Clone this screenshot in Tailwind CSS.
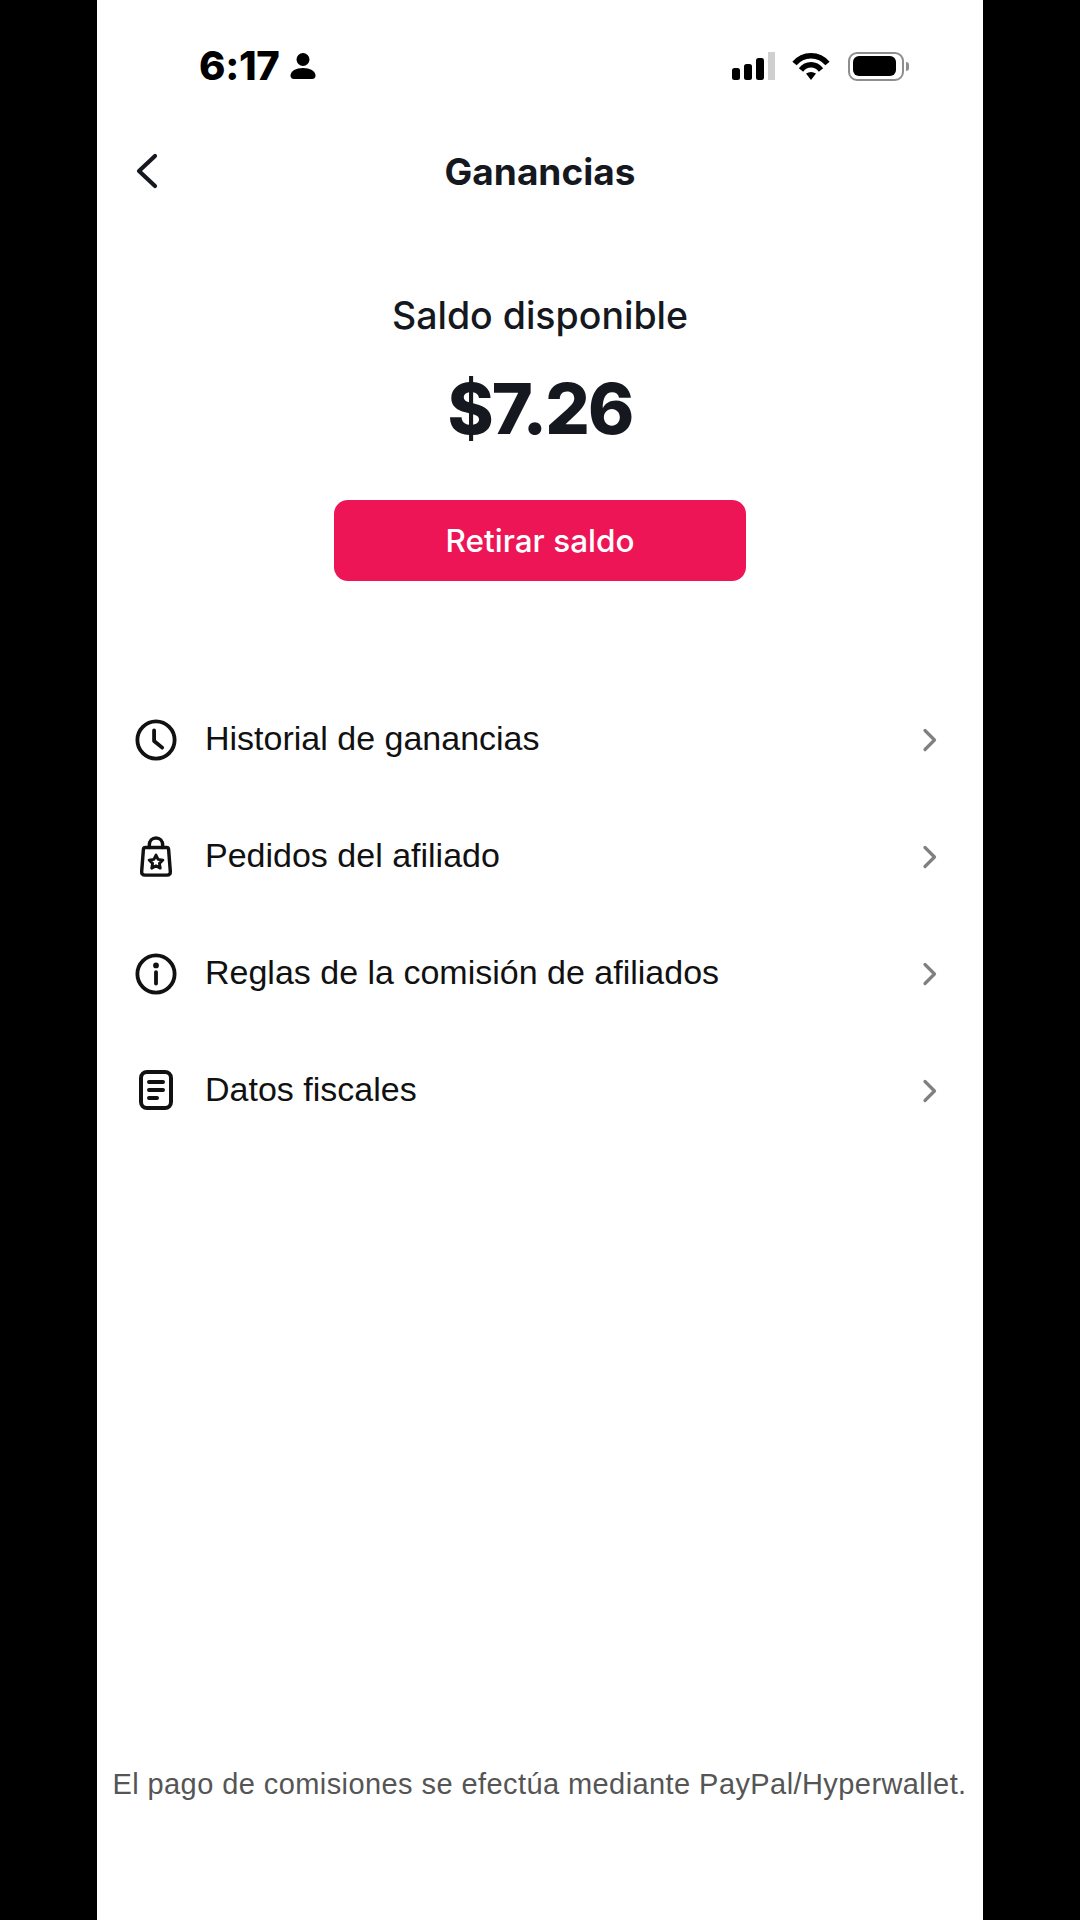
<!DOCTYPE html>
<html lang="es">
<head>
<meta charset="utf-8">
<script src="https://cdn.jsdelivr.net/npm/@tailwindcss/browser@4"></script>
<title>Ganancias</title>
</head>
<body class="bg-black">
<div class="w-[1080px] h-[1920px] bg-black flex justify-center overflow-hidden">
  <main class="w-[886px] h-[1920px] bg-white flex flex-col font-['Inter',sans-serif] text-[#16181f]">
    <!-- status bar -->
    <div class="h-[66px] mt-[33px] relative shrink-0 flex items-center justify-between pl-[102px] pr-[74px]">
      <div class="flex items-center gap-[10px] text-black">
        <span class="text-[40px] font-extrabold leading-none tracking-[-0.3px]">6:17</span>
        <svg width="26" height="28" viewBox="0 0 26 28" fill="currentColor"><circle cx="13" cy="7.500" r="6.500"/><path d="M0.500 23.500c0-4.500 5.500-7.500 12.500-7.500s12.500 3 12.500 7.500c0 2.500-1.500 3.500-3.500 3.500H4c-2 0-3.500-1-3.500-3.500z"/></svg>
      </div>
      <div class="flex items-center">
        <svg class="mr-[16px]" width="44" height="28" viewBox="0 0 44 28"><rect x="0" y="16" width="8" height="12" rx="2.500" fill="#000"/><rect x="12" y="12" width="8" height="16" rx="2.500" fill="#000"/><rect x="24" y="6" width="8" height="22" rx="2.500" fill="#000"/><rect x="36" y="0" width="7" height="28" fill="#cfcfcf"/></svg>
        <svg class="mr-[18px]" width="38" height="28" viewBox="0 0 38 28" fill="none" stroke="#000" stroke-width="5.500"><path d="M2.500 11.500C11 1 27 1 35.500 11.500"/><path d="M9 18C14.500 11 23.500 11 29 18"/><path d="M14 21.500Q19 18.500 24 21.500L19 28z" fill="#000" stroke="none"/></svg>
        <div class="flex items-center gap-[2px]">
          <div class="w-[56px] h-[29px] rounded-[9px] border-[2.500px] border-[#8e8e8e] p-[2.500px]"><div class="w-[43px] h-full rounded-[6px] bg-black"></div></div>
          <div class="w-[3px] h-[9px] rounded-r-full bg-[#8e8e8e]"></div>
        </div>
      </div>
    </div>
    <!-- header -->
    <header class="h-[72px] mt-[36px] relative flex items-center justify-center shrink-0">
      <svg class="absolute left-[38px] top-[18px]" width="24" height="36" viewBox="0 0 24 36" fill="none" stroke="#16181f" stroke-width="4.200" stroke-linecap="round" stroke-linejoin="round"><path d="M20 3L4 18l16 15"/></svg>
      <h1 class="text-[37px] font-bold leading-none">Ganancias</h1>
    </header>
    <!-- balance -->
    <section class="flex flex-col items-center shrink-0">
      <p class="mt-[85px] text-[37.500px] font-medium leading-[48px]">Saldo disponible</p>
      <p class="mt-[24px] text-[70px] font-extrabold leading-[90px] tracking-[-1.800px]">$7.26</p>
      <button class="mt-[46px] w-[412px] h-[81px] rounded-[14px] bg-[#ee1556] text-white text-[31.500px] font-medium pt-px">Retirar saldo</button>
    </section>
    <!-- list -->
    <ul class="mt-[100px] flex flex-col font-['Liberation_Sans',sans-serif] text-[#111] text-[34px] shrink-0">
      <li class="h-[117px] flex items-center pl-[37.500px] pr-[44px]">
        <svg class="w-[42px] h-[42px] shrink-0" viewBox="0 0 44 44" fill="none" stroke="#111" stroke-width="4" stroke-linecap="round" stroke-linejoin="round"><circle cx="22" cy="22" r="19.500"/><path d="M20 12v11l8.500 7"/></svg>
        <span class="ml-[28.500px] flex-1 pb-[2px]">Historial de ganancias</span>
        <svg width="18" height="24" viewBox="0 0 18 24" fill="none" stroke="#808080" stroke-width="3.200" stroke-linecap="round" stroke-linejoin="round"><path d="M4 2.500l9.500 9.500L4 21.500"/></svg>
      </li>
      <li class="h-[117px] flex items-center pl-[37.500px] pr-[44px]">
        <svg class="w-[42px] h-[42px] shrink-0" viewBox="0 0 42 44" fill="none" stroke="#111" stroke-width="3.600" stroke-linecap="round" stroke-linejoin="round"><path d="M10 12h22q2 0 2.200 2L36 37q.3 4-3.500 4h-23Q5.700 41 6 37L7.800 14q.2-2 2.200-2z"/><path d="M14 12V9.500C14 5 17 2 21 2s7 3 7 7.500V12"/><path d="M21 20l2.200 4.500 5 .7-3.600 3.500.9 5-4.500-2.400-4.500 2.400.9-5-3.600-3.500 5-.7z" stroke-width="3"/></svg>
        <span class="ml-[28.500px] flex-1 pb-[2px]">Pedidos del afiliado</span>
        <svg width="18" height="24" viewBox="0 0 18 24" fill="none" stroke="#808080" stroke-width="3.200" stroke-linecap="round" stroke-linejoin="round"><path d="M4 2.500l9.500 9.500L4 21.500"/></svg>
      </li>
      <li class="h-[117px] flex items-center pl-[37.500px] pr-[44px]">
        <svg class="w-[42px] h-[42px] shrink-0" viewBox="0 0 44 44" fill="none" stroke="#111" stroke-width="4" stroke-linecap="round"><circle cx="22" cy="22" r="19.500"/><circle cx="22" cy="13" r="3" fill="#111" stroke="none"/><path d="M22 20v12"/></svg>
        <span class="ml-[28.500px] flex-1 pb-[2px]">Reglas de la comisión de afiliados</span>
        <svg width="18" height="24" viewBox="0 0 18 24" fill="none" stroke="#808080" stroke-width="3.200" stroke-linecap="round" stroke-linejoin="round"><path d="M4 2.500l9.500 9.500L4 21.500"/></svg>
      </li>
      <li class="h-[117px] flex items-center pl-[37.500px] pr-[44px]">
        <svg class="w-[42px] h-[42px] shrink-0" viewBox="0 0 42 42" fill="none" stroke="#111" stroke-width="4" stroke-linecap="round"><rect x="6" y="2" width="30" height="36" rx="6"/><path d="M14 12h14M14 20h14M14 28h8"/></svg>
        <span class="ml-[28.500px] flex-1 pb-[2px]">Datos fiscales</span>
        <svg width="18" height="24" viewBox="0 0 18 24" fill="none" stroke="#808080" stroke-width="3.200" stroke-linecap="round" stroke-linejoin="round"><path d="M4 2.500l9.500 9.500L4 21.500"/></svg>
      </li>
    </ul>
    <!-- footer -->
    <p class="mt-auto mb-[116px] pr-[1px] text-center whitespace-nowrap font-['Liberation_Sans',sans-serif] text-[#555] text-[29px] leading-[40px] tracking-[0.42px]">El pago de comisiones se efectúa mediante PayPal/Hyperwallet.</p>
  </main>
</div>
</body>
</html>
